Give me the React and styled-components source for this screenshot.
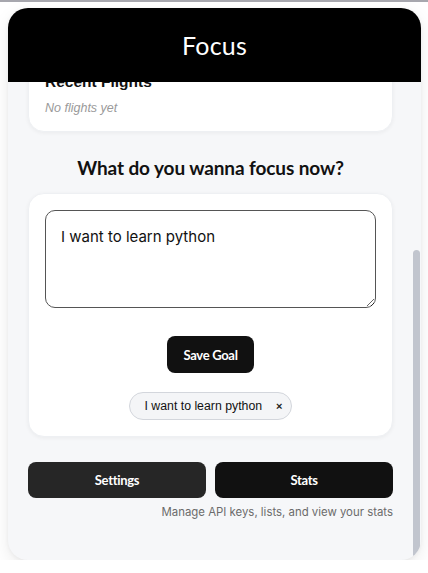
import React, { useState } from 'react';
import styled, { createGlobalStyle } from 'styled-components';

const GlobalStyle = createGlobalStyle`
  html, body {
    margin: 0;
    background: #ffffff;
  }
  body {
    border-top: 2px solid #a7a7ae;
    padding: 6px 7px 0 8px;
    font-family: "Inter", "Liberation Sans", sans-serif;
  }
`;

const Panel = styled.div`
  position: relative;
  height: 552px;
  border-radius: 20px;
  overflow: hidden;
  background: #f6f7f9;
  box-shadow: 0 6px 18px rgba(0, 0, 0, 0.08), 0 1px 4px rgba(0, 0, 0, 0.05);
`;

const Header = styled.header`
  position: absolute;
  top: 0;
  left: 0;
  right: 0;
  z-index: 2;
  height: 74px;
  background: #000;
  color: #fff;
  display: flex;
  align-items: center;
  justify-content: center;
  font-family: "Lato", "Open Sans", sans-serif;
  font-size: 25px;
  letter-spacing: 0.2px;
`;

const Body = styled.div`
  height: 100%;
  overflow: hidden;
  box-sizing: border-box;
  padding: 48px 28px 0 20px;
  display: flex;
  flex-direction: column;
`;

/* scroll thumb drawn over the panel's right edge */
const ScrollThumb = styled.div`
  position: absolute;
  z-index: 1;
  top: 242px;
  bottom: 2px;
  right: 1px;
  width: 7px;
  border-radius: 4px;
  background: #c1c5ce;
`;

const Card = styled.section`
  background: #fff;
  border-radius: 16px;
  border: 1px solid #eef0f3;
  box-shadow: 0 1px 4px rgba(0, 0, 0, 0.05);
  padding: 16px;
  display: flex;
  flex-direction: column;
  align-items: ${(p) => (p.$center ? 'center' : 'stretch')};
  margin-bottom: ${(p) => p.$gap || '0'};
`;

const CardTitle = styled.h3`
  margin: 0 0 10px 0;
  font-family: "Liberation Sans", "Inter", sans-serif;
  font-size: 15.5px;
  font-weight: 700;
  color: #111;
`;

const Muted = styled.p`
  margin: 0;
  font-family: "Liberation Sans", sans-serif;
  font-style: italic;
  font-size: 12.5px;
  color: #9a9a9a;
`;

const Heading = styled.h2`
  margin: 24px 0 14px;
  text-align: center;
  font-family: "Lato", "Open Sans", sans-serif;
  font-size: 19px;
  font-weight: 700;
  letter-spacing: -0.1px;
  color: #111;
`;

const GoalInput = styled.textarea`
  box-sizing: border-box;
  width: 100%;
  height: 98px;
  border: 1px solid #555;
  border-radius: 10px;
  padding: 16px 15px;
  font-family: "Inter", "Liberation Sans", sans-serif;
  font-size: 15px;
  color: #111;
  resize: vertical;
  outline: none;
  margin-bottom: 28px;
`;

const DarkButton = styled.button`
  border: none;
  border-radius: 8px;
  background: ${(p) => p.$bg || '#111'};
  color: #fff;
  font-family: "Lato", "Open Sans", sans-serif;
  font-weight: 700;
  font-size: 13px;
  letter-spacing: -0.3px;
  height: ${(p) => p.$h || '36px'};
  padding: 0 16px;
  cursor: pointer;
`;

const Row = styled.div`
  display: grid;
  grid-template-columns: 1fr 1fr;
  gap: 9px;
`;

const Chip = styled.div`
  margin-top: 19px;
  display: inline-flex;
  align-items: center;
  gap: 14px;
  height: 28px;
  box-sizing: border-box;
  padding: 0 6px 0 14px;
  border: 1px solid #d3d6dc;
  border-radius: 14px;
  background: #f4f5f7;
  font-family: "Liberation Sans", sans-serif;
  font-size: 12.3px;
  color: #111;
`;

const ChipX = styled.span`
  font-size: 11px;
  font-weight: 700;
  color: #222;
  padding-right: 2px;
`;

const Caption = styled.p`
  margin: 7px 0 0;
  text-align: right;
  font-family: "Inter", "Liberation Sans", sans-serif;
  font-size: 11.4px;
  color: #6b6b6b;
`;

export default function App() {
  const [goal, setGoal] = useState('I want to learn python');

  return (
    <>
      <GlobalStyle />
      <Panel>
        <Header>Focus</Header>
        <Body>
          <Card>
            <CardTitle>Recent Flights</CardTitle>
            <Muted>No flights yet</Muted>
          </Card>
          <Heading>What do you wanna focus now?</Heading>
          <Card $center $gap="25px">
            <GoalInput value={goal} onChange={(e) => setGoal(e.target.value)} />
            <DarkButton $h="37px">Save Goal</DarkButton>
            <Chip>
              I want to learn python
              <ChipX>×</ChipX>
            </Chip>
          </Card>
          <Row>
            <DarkButton $bg="#262626">Settings</DarkButton>
            <DarkButton>Stats</DarkButton>
          </Row>
          <Caption>Manage API keys, lists, and view your stats</Caption>
        </Body>
        <ScrollThumb />
      </Panel>
    </>
  );
}
